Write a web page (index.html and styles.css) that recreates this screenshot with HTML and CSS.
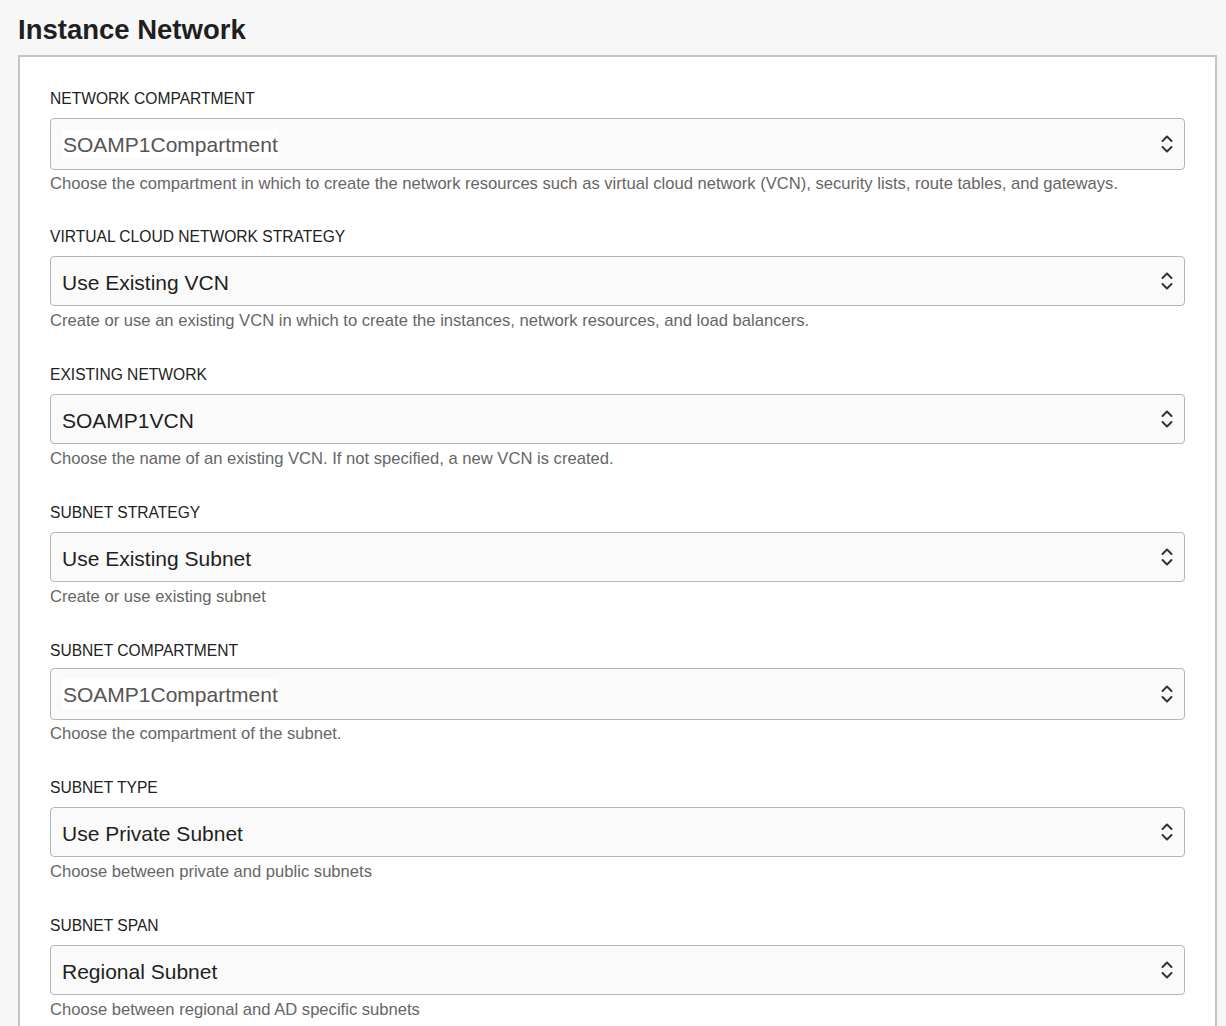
FILE: index.html
```html
<!DOCTYPE html>
<html lang="en">
<head>
<meta charset="utf-8">
<title>Instance Network</title>
<link rel="stylesheet" href="styles.css">
</head>
<body>
<h1 class="title">Instance Network</h1>
<div class="panel">
  <div class="field compact">
    <div class="label">NETWORK COMPARTMENT</div>
    <div class="select tall"><span class="value chip">SOAMP1Compartment</span><svg class="chev" width="14" height="22" viewBox="0 0 14 22"><path d="M2.5 8 L7 3.5 L11.5 8 M2.5 14 L7 18.5 L11.5 14" fill="none" stroke="#333" stroke-width="2" stroke-linecap="round" stroke-linejoin="round"/></svg></div>
    <div class="help">Choose the compartment in which to create the network resources such as virtual cloud network (VCN), security lists, route tables, and gateways.</div>
  </div>
  <div class="field">
    <div class="label">VIRTUAL CLOUD NETWORK STRATEGY</div>
    <div class="select"><span class="value">Use Existing VCN</span><svg class="chev" width="14" height="22" viewBox="0 0 14 22"><path d="M2.5 8 L7 3.5 L11.5 8 M2.5 14 L7 18.5 L11.5 14" fill="none" stroke="#333" stroke-width="2" stroke-linecap="round" stroke-linejoin="round"/></svg></div>
    <div class="help">Create or use an existing VCN in which to create the instances, network resources, and load balancers.</div>
  </div>
  <div class="field">
    <div class="label">EXISTING NETWORK</div>
    <div class="select"><span class="value">SOAMP1VCN</span><svg class="chev" width="14" height="22" viewBox="0 0 14 22"><path d="M2.5 8 L7 3.5 L11.5 8 M2.5 14 L7 18.5 L11.5 14" fill="none" stroke="#333" stroke-width="2" stroke-linecap="round" stroke-linejoin="round"/></svg></div>
    <div class="help">Choose the name of an existing VCN. If not specified, a new VCN is created.</div>
  </div>
  <div class="field">
    <div class="label">SUBNET STRATEGY</div>
    <div class="select"><span class="value">Use Existing Subnet</span><svg class="chev" width="14" height="22" viewBox="0 0 14 22"><path d="M2.5 8 L7 3.5 L11.5 8 M2.5 14 L7 18.5 L11.5 14" fill="none" stroke="#333" stroke-width="2" stroke-linecap="round" stroke-linejoin="round"/></svg></div>
    <div class="help">Create or use existing subnet</div>
  </div>
  <div class="field">
    <div class="label">SUBNET COMPARTMENT</div>
    <div class="select tall tall-up"><span class="value chip">SOAMP1Compartment</span><svg class="chev" width="14" height="22" viewBox="0 0 14 22"><path d="M2.5 8 L7 3.5 L11.5 8 M2.5 14 L7 18.5 L11.5 14" fill="none" stroke="#333" stroke-width="2" stroke-linecap="round" stroke-linejoin="round"/></svg></div>
    <div class="help">Choose the compartment of the subnet.</div>
  </div>
  <div class="field">
    <div class="label">SUBNET TYPE</div>
    <div class="select"><span class="value">Use Private Subnet</span><svg class="chev" width="14" height="22" viewBox="0 0 14 22"><path d="M2.5 8 L7 3.5 L11.5 8 M2.5 14 L7 18.5 L11.5 14" fill="none" stroke="#333" stroke-width="2" stroke-linecap="round" stroke-linejoin="round"/></svg></div>
    <div class="help">Choose between private and public subnets</div>
  </div>
  <div class="field">
    <div class="label">SUBNET SPAN</div>
    <div class="select"><span class="value">Regional Subnet</span><svg class="chev" width="14" height="22" viewBox="0 0 14 22"><path d="M2.5 8 L7 3.5 L11.5 8 M2.5 14 L7 18.5 L11.5 14" fill="none" stroke="#333" stroke-width="2" stroke-linecap="round" stroke-linejoin="round"/></svg></div>
    <div class="help">Choose between regional and AD specific subnets</div>
  </div>
</div>
</body>
</html>
```
FILE: styles.css
```css
html, body {
  margin: 0;
  padding: 0;
  background: #f7f7f7;
  font-family: "Liberation Sans", Arial, sans-serif;
  color: #222;
}
body {
  padding: 15px 9px 0 18px;
  height: 1026px;
  box-sizing: border-box;
  overflow: hidden;
}
.title {
  margin: 0 0 10px 0;
  font-size: 27.5px;
  line-height: 30px;
  font-weight: bold;
  color: #1f1f1f;
}
.panel {
  background: #fff;
  border: 2px solid #c2c5c8;
  padding: 33px 30px 40px 30px;
  display: flex;
  flex-direction: column;
}
.field {
  display: flex;
  flex-direction: column;
  padding-bottom: 35px;
}
.field.compact {
  padding-bottom: 34px;
}
.label {
  font-size: 15.6px;
  line-height: 18px;
  color: #222;
  margin-bottom: 10px;
}
.select {
  height: 50px;
  box-sizing: border-box;
  border: 1.5px solid #b3b6b9;
  border-radius: 4px;
  background: #fafafa;
  display: flex;
  align-items: center;
  justify-content: space-between;
  padding: 0 10px 0 11px;
}
.select.tall {
  height: 52px;
  margin-bottom: -1px;
}
.select.tall-up {
  margin-top: -2px;
}
.value {
  font-size: 21px;
  line-height: 24px;
  padding-top: 4px;
  color: #1f1f1f;
}
.value.chip {
  color: #555;
  background: #fff;
  padding: 4px 1px 2px 1px;
}
.chev {
  display: block;
}
.help {
  margin-top: 5px;
  font-size: 16.6px;
  line-height: 20px;
  color: #666;
}
```
